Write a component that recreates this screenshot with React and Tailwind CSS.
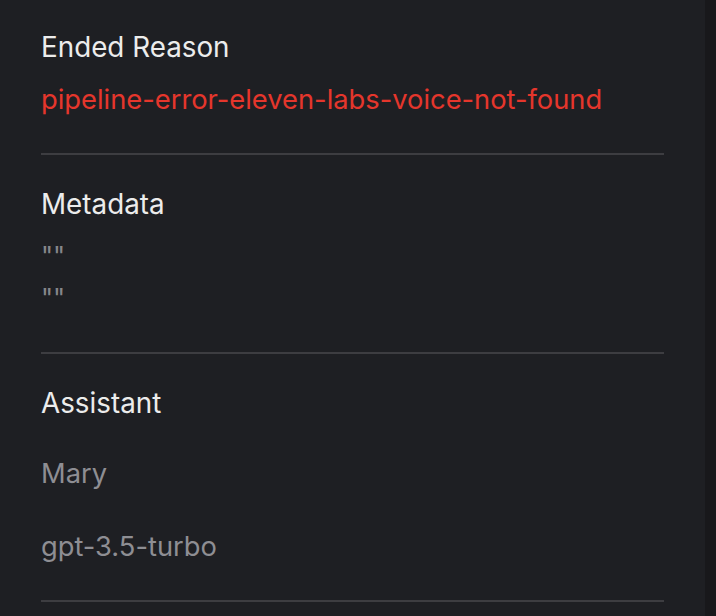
import React from "react";

export default function App() {
  return (
    <div className="flex w-[716px] h-[616px] overflow-hidden bg-[#1e1f23]" style={{ fontFamily: "Inter, 'Noto Sans', sans-serif" }}>
      <div className="flex-1 pl-[41px] pr-[41px]">
        <div className="w-[623px] pt-[31px]">
          <div className="text-[27.8px] leading-[32px] text-[#ececec]">Ended Reason</div>
          <div className="mt-[21px] text-[27.3px] leading-[32px] text-[#e5362c]">pipeline-error-eleven-labs-voice-not-found</div>
          <div className="mt-[37px] h-[2px] bg-[#3d3d41]" />

          <div className="mt-[33px] text-[27.8px] leading-[32px] text-[#ececec]">Metadata</div>
          <div className="mt-[20px] text-[26px] leading-[32px] text-[#86868a]">""</div>
          <div className="mt-[10px] text-[26px] leading-[32px] text-[#86868a]">""</div>
          <div className="mt-[38px] h-[2px] bg-[#3d3d41]" />

          <div className="mt-[33px] text-[27.8px] leading-[32px] text-[#ececec]">Assistant</div>
          <div className="mt-[39px] text-[27.3px] leading-[32px] text-[#8e8e93]">Mary</div>
          <div className="mt-[41px] text-[27.3px] leading-[32px] text-[#8e8e93]">gpt-3.5-turbo</div>
          <div className="mt-[37px] h-[2px] bg-[#3d3d41]" />
        </div>
      </div>
      <div className="w-[11px] bg-[#18181b]" />
    </div>
  );
}
